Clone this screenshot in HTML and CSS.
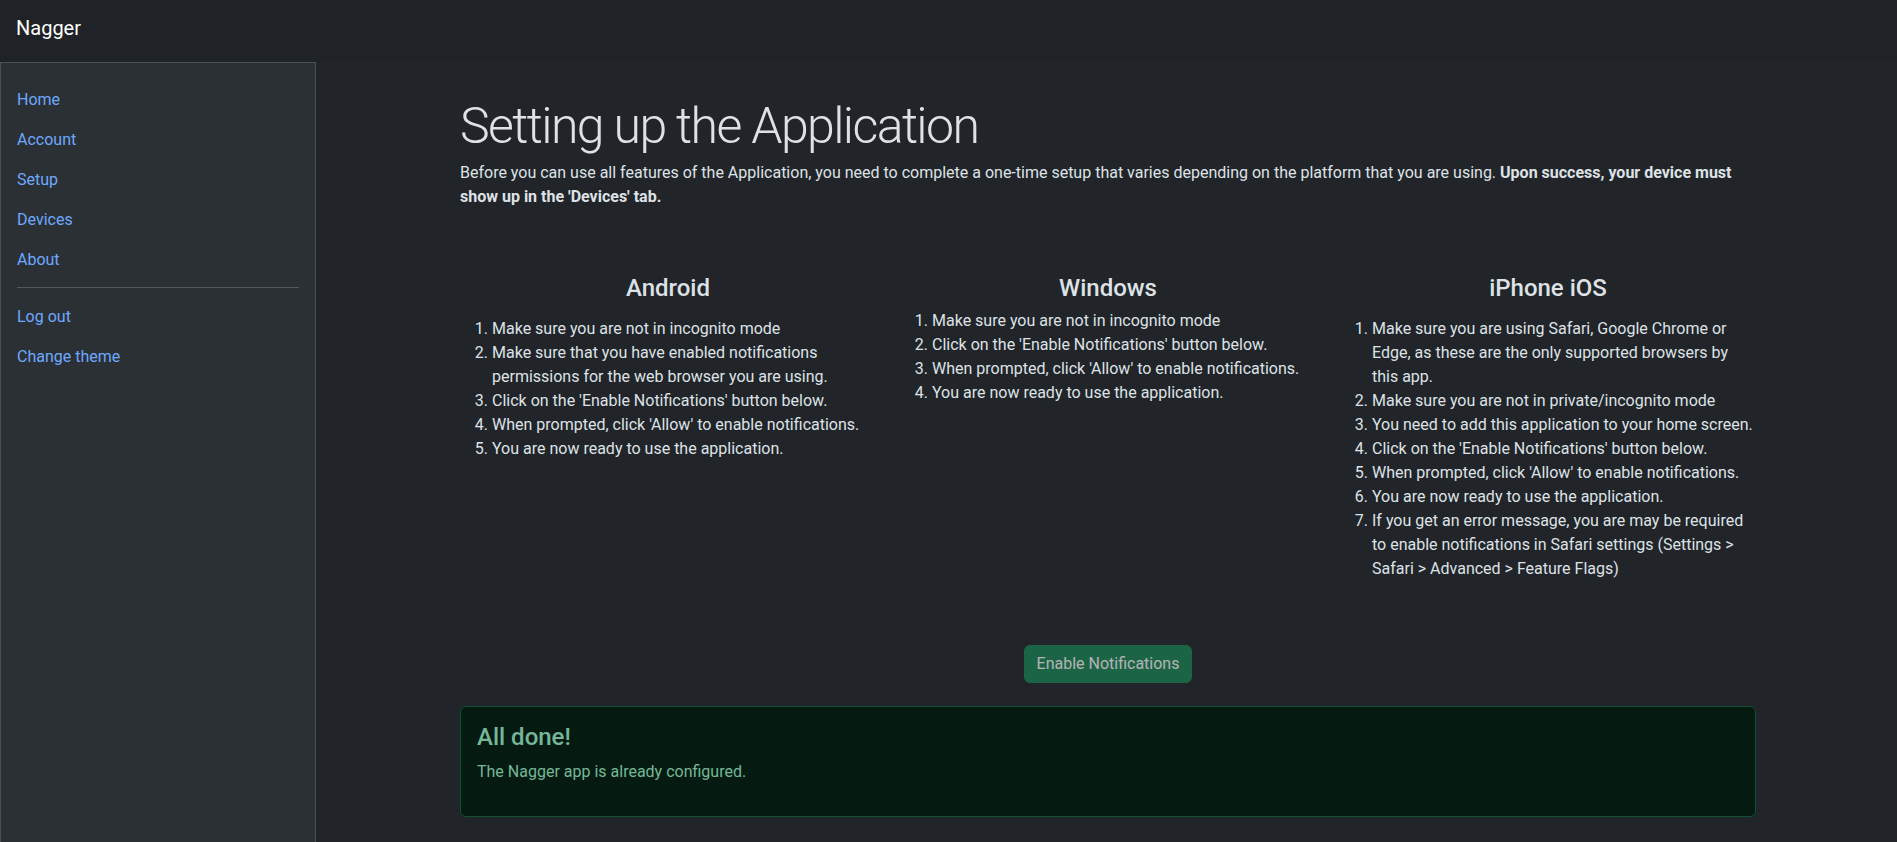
FILE: index.html
```html
<!DOCTYPE html>
<html lang="en">
<head>
<meta charset="utf-8">
<title>Nagger - Setup</title>
<link rel="stylesheet" href="styles.css">
</head>
<body>
<header class="navbar">
  <a class="brand" href="#">Nagger</a>
</header>
<div class="layout">
  <aside class="sidebar">
    <nav class="side-nav">
      <a class="side-link" href="#">Home</a>
      <a class="side-link" href="#">Account</a>
      <a class="side-link" href="#">Setup</a>
      <a class="side-link" href="#">Devices</a>
      <a class="side-link" href="#">About</a>
      <hr class="side-sep">
      <a class="side-link" href="#">Log out</a>
      <a class="side-link" href="#">Change theme</a>
    </nav>
  </aside>
  <main class="main">
    <div class="container">
      <h1 class="page-title">Setting up the Application</h1>
      <p class="intro">Before you can use all features of the Application, you need to complete a one-time setup that varies depending on the platform that you are using. <strong>Upon success, your device must show up in the 'Devices' tab.</strong></p>

      <div class="platforms">
        <section class="platform">
          <h4 class="platform-title">Android</h4>
          <ol class="steps steps-spaced">
            <li>Make sure you are not in incognito mode</li>
            <li>Make sure that you have enabled notifications permissions for the web browser you are using.</li>
            <li>Click on the 'Enable Notifications' button below.</li>
            <li>When prompted, click 'Allow' to enable notifications.</li>
            <li>You are now ready to use the application.</li>
          </ol>
        </section>
        <section class="platform">
          <h4 class="platform-title">Windows</h4>
          <ol class="steps">
            <li>Make sure you are not in incognito mode</li>
            <li>Click on the 'Enable Notifications' button below.</li>
            <li>When prompted, click 'Allow' to enable notifications.</li>
            <li>You are now ready to use the application.</li>
          </ol>
        </section>
        <section class="platform">
          <h4 class="platform-title">iPhone iOS</h4>
          <ol class="steps steps-spaced">
            <li>Make sure you are using Safari, Google Chrome or Edge, as these are the only supported browsers by this app.</li>
            <li>Make sure you are not in private/incognito mode</li>
            <li>You need to add this application to your home screen.</li>
            <li>Click on the 'Enable Notifications' button below.</li>
            <li>When prompted, click 'Allow' to enable notifications.</li>
            <li>You are now ready to use the application.</li>
            <li>If you get an error message, you are may be required to enable notifications in Safari settings (Settings &gt; Safari &gt; Advanced &gt; Feature Flags)</li>
          </ol>
        </section>
      </div>

      <div class="actions">
        <button class="btn-success" type="button" disabled>Enable Notifications</button>
      </div>

      <div class="alert-success">
        <h4 class="alert-heading">All done!</h4>
        <p class="alert-text">The Nagger app is already configured.</p>
      </div>
    </div>
  </main>
</div>
</body>
</html>
```
FILE: styles.css
```css
* { box-sizing: border-box; }

html, body {
  margin: 0;
  padding: 0;
}

body {
  background: #212529;
  color: #dee2e6;
  font-family: Roboto, "Liberation Sans", Arial, sans-serif;
  font-size: 16px;
  line-height: 24px;
  min-height: 100vh;
  display: flex;
  flex-direction: column;
}

a { text-decoration: none; }

/* top bar */
.navbar {
  height: 62px;
  flex: 0 0 62px;
  background: #1f2226;
  padding: 13px 16px 0;
}

.brand {
  color: #ffffff;
  font-size: 20px;
  line-height: 30px;
}

/* layout */
.layout {
  flex: 1;
  display: flex;
  align-items: stretch;
}

.sidebar {
  flex: 0 0 316px;
  width: 316px;
  background: #2b3035;
  border: 1px solid #495057;
  border-bottom: none;
  padding: 17px 16px 0;
}

.side-nav {
  display: flex;
  flex-direction: column;
}

.side-link {
  color: #6ea8fe;
  padding: 8px 0;
  line-height: 24px;
}

.side-sep {
  border: none;
  border-top: 1px solid #54595e;
  margin: 7px 0 9px;
  height: 0;
}

/* main */
.main {
  flex: 1;
  padding: 34px 0 24px 3px;
}

.container {
  width: 1296px;
  margin: 0 auto;
}

.page-title {
  margin: 0;
  font-size: 50px;
  font-weight: 300;
  line-height: 60px;
  letter-spacing: -1.6px;
  color: #dee2e6;
}

.intro {
  margin: 5px 0 0;
}

.intro strong {
  font-weight: 700;
}

.platforms {
  margin-top: 65px;
  display: grid;
  grid-template-columns: repeat(3, 1fr);
  column-gap: 24px;
}

.platform-title {
  margin: 0 0 6px;
  text-align: center;
  font-size: 24px;
  font-weight: 500;
  line-height: 29px;
  color: #dee2e6;
}

.steps {
  margin: 0;
  padding-left: 32px;
}

.steps-spaced {
  margin-top: 14px;
}

.actions {
  margin-top: 64px;
  display: flex;
  justify-content: center;
}

.btn-success {
  font-family: inherit;
  font-size: 16px;
  line-height: 24px;
  padding: 6px 12px;
  color: #ffffff;
  background: #198754;
  border: 1px solid #198754;
  border-radius: 6px;
  opacity: 0.65;
}

.alert-success {
  margin-top: 23px;
  background: #051b11;
  border: 1px solid #0f5132;
  border-radius: 6px;
  padding: 16px;
  color: #75b798;
}

.alert-heading {
  margin: 0 0 8px;
  font-size: 24px;
  font-weight: 500;
  line-height: 29px;
  color: #75b798;
}

.alert-text {
  margin: 0 0 16px;
}
```
